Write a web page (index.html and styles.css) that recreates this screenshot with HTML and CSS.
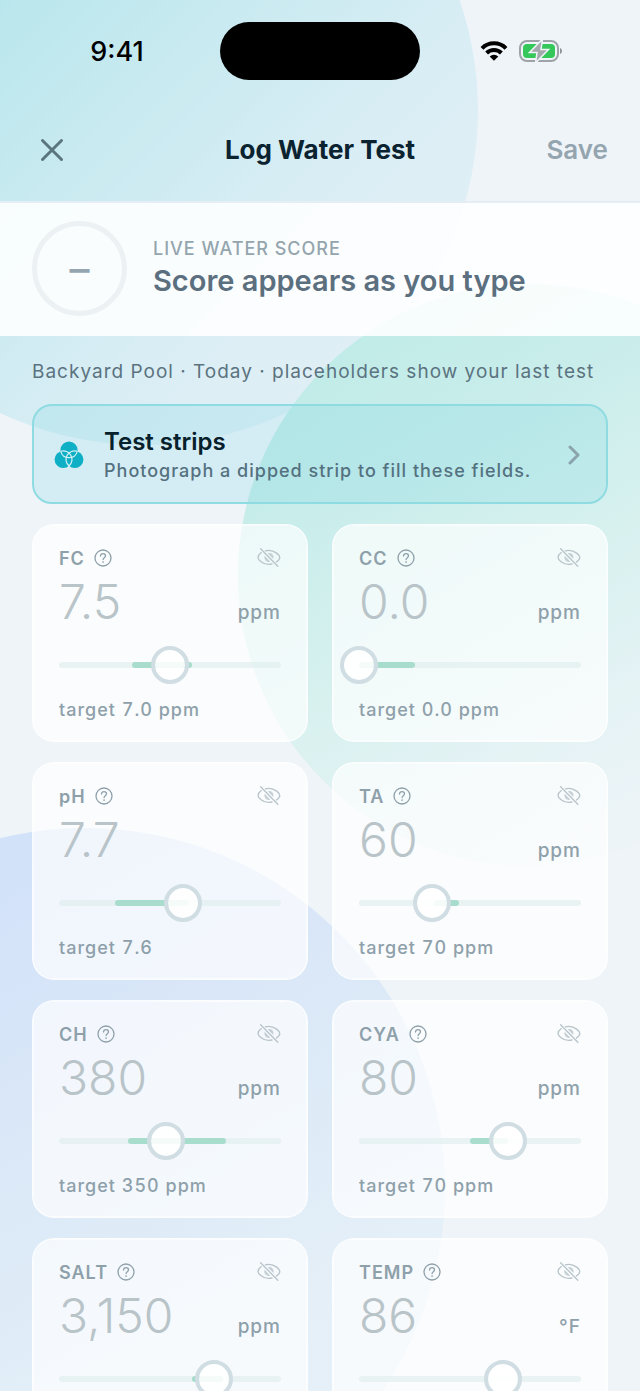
FILE: index.html
```html
<!DOCTYPE html>
<html lang="en">

<head>
    <meta charset="UTF-8">
    <meta name="viewport" content="width=device-width, initial-scale=1.0">
    <title>Log Water Test</title>
    <link rel="stylesheet" href="styles.css">
</head>

<body>
    <!-- Shared icons -->
    <svg class="sprite" aria-hidden="true">
        <symbol id="icon-help" viewBox="0 0 18 18">
            <circle cx="9" cy="9" r="8" />
            <path d="M6.500 7c0-1.500 1.100-2.400 2.500-2.400s2.500.9 2.500 2.200c0 1.900-2.400 1.900-2.400 3.800" />
            <circle cx="9.100" cy="13.100" r=".3" />
        </symbol>
        <symbol id="icon-eye-off" viewBox="0 0 24 20">
            <path d="M4.300 4.600C2.200 6.200 1 8.200 1 9.400c0 2 4.700 7 10.800 7 1.200 0 2.300-.2 3.300-.5" />
            <path d="M8.400 2.900c1-.3 2.200-.5 3.400-.5C18 2.400 22.800 7.300 22.800 9.400c0 1.200-1.300 3.100-3.400 4.700" />
            <path d="M7.700 7.800a4.400 4.400 0 0 0 5.500 5.900z" fill="currentColor" stroke="none" opacity=".8" />
            <path d="M10.800 5.200a4.400 4.400 0 0 1 5.500 5.700z" fill="currentColor" stroke="none" opacity=".8" />
            <path d="M3.600 .8l17.200 17.400" />
        </symbol>
    </svg>

    <div class="screen">
        <div class="backdrop" aria-hidden="true">
            <span class="bubble bubble-aqua"></span>
            <span class="bubble bubble-mint"></span>
            <span class="bubble bubble-blue"></span>
        </div>

        <!-- Status bar -->
        <div class="status-bar">
            <span class="status-time">9:41</span>
            <span class="island"></span>
            <span class="status-icons">
                <svg width="28" height="20" viewBox="0 0 28 20" aria-label="Wi-Fi">
                    <g fill="none" stroke="#000" stroke-width="4">
                        <path d="M2 7.300a17 17 0 0 1 24 0" />
                        <path d="M6.600 12a10.500 10.500 0 0 1 14.800 0" />
                    </g>
                    <path d="M14 19.800l-4.300-4.200a6.100 6.100 0 0 1 8.600 0z" />
                </svg>
                <svg width="44" height="24" viewBox="0 0 44 24" aria-label="Battery charging">
                    <rect x="1" y="2" width="38" height="20" rx="7" fill="none" stroke="#9da3a6" stroke-width="2" />
                    <rect x="4" y="5" width="32" height="14" rx="4" fill="#34c759" />
                    <path d="M41 9c2.700 1 2.700 5 0 6z" fill="#8f9598" />
                    <path d="M23.500 0L10.500 13.500h7.500L16.500 24l13-13.500h-7.500z" fill="#a3a9ac" stroke="#eff4f8" stroke-width="1.500" />
                </svg>
            </span>
        </div>

        <header class="nav-bar">
            <button type="button" class="close-btn" aria-label="Close">
                <svg width="24" height="24" viewBox="0 0 24 24">
                    <path d="M2.500 2.500l19 19M21.500 2.500l-19 19" />
                </svg>
            </button>
            <h1>Log Water Test</h1>
            <button type="button" class="save-btn">Save</button>
        </header>

        <section class="score">
            <div class="score-ring">–</div>
            <div>
                <p class="score-label">LIVE WATER SCORE</p>
                <h2>Score appears as you type</h2>
            </div>
        </section>

        <main>
            <p class="note">Backyard Pool · Today · placeholders show your last test</p>

            <a href="#strips" class="strips">
                <svg class="strips-icon" width="30" height="28" viewBox="0 0 30 28">
                    <g fill="#0fb0c6">
                        <circle cx="15" cy="9" r="8.600" />
                        <circle cx="9.200" cy="18.500" r="8.600" />
                        <circle cx="20.800" cy="18.500" r="8.600" />
                    </g>
                    <g fill="none" stroke="#d5f0f5" stroke-width="1.200">
                        <path d="M6.700 10.300A8.600 8.600 0 0 0 23.300 10.300" />
                        <path d="M6.700 10.300A8.600 8.600 0 0 1 15 25" />
                        <path d="M23.300 10.300A8.600 8.600 0 0 0 15 25" />
                    </g>
                </svg>
                <span class="strips-text">
                    <strong>Test strips</strong>
                    <span>Photograph a dipped strip to fill these fields.</span>
                </span>
                <svg class="chevron" width="12" height="20" viewBox="0 0 12 20">
                    <path d="M2 2l8 8-8 8" />
                </svg>
            </a>

            <form class="readings" id="readings"></form>
        </main>
    </div>

    <script>
        // low / high are the ideal band, both as a percentage of the slider
        const readings = [
            { id: 'fc', name: 'FC', last: '7.5', unit: 'ppm', target: '7.0 ppm', low: 33, high: 60, value: 50 },
            { id: 'cc', name: 'CC', last: '0.0', unit: 'ppm', target: '0.0 ppm', low: 0, high: 25, value: 0 },
            { id: 'ph', name: 'pH', last: '7.7', unit: '', target: '7.6', low: 25, high: 58, value: 56 },
            { id: 'ta', name: 'TA', last: '60', unit: 'ppm', target: '70 ppm', low: 34, high: 45, value: 33 },
            { id: 'ch', name: 'CH', last: '380', unit: 'ppm', target: '350 ppm', low: 31, high: 75, value: 48 },
            { id: 'cya', name: 'CYA', last: '80', unit: 'ppm', target: '70 ppm', low: 50, high: 67, value: 67 },
            { id: 'salt', name: 'SALT', last: '3,150', unit: 'ppm', low: 60, high: 74, value: 70 },
            { id: 'temp', name: 'TEMP', last: '86', unit: '°F', low: 66, high: 66, value: 65 }
        ];

        document.getElementById('readings').innerHTML = readings.map(r => `
            <div class="card">
                <div class="card-head">
                    <label for="${r.id}">${r.name}</label>
                    <button type="button" aria-label="About ${r.name}">
                        <svg class="help" width="18" height="18"><use href="#icon-help" /></svg>
                    </button>
                    <button type="button" class="hide-btn" aria-label="Hide ${r.name}">
                        <svg class="eye" width="24" height="20"><use href="#icon-eye-off" /></svg>
                    </button>
                </div>
                <div class="card-value">
                    <input type="text" inputmode="decimal" id="${r.id}" placeholder="${r.last}">
                    <span class="unit">${r.unit}</span>
                </div>
                <div class="slider" style="--low: ${r.low}%; --high: ${r.high}%">
                    <span class="band"></span>
                    <input type="range" min="0" max="100" value="${r.value}" aria-label="${r.name} level">
                </div>
                ${r.target ? `<p class="target">target ${r.target}</p>` : ''}
            </div>
        `).join('');
    </script>
</body>

</html>
```
FILE: styles.css
```css
* {
    box-sizing: border-box;
}

body {
    margin: 0;
    font-family: Inter, "Liberation Sans", sans-serif;
    color: #0b2230;
    background-color: #eff4f9;
}

h1, h2, p {
    margin: 0;
}

button {
    padding: 0;
    border: none;
    background: none;
    font-family: inherit;
    cursor: pointer;
}

.sprite {
    display: none;
}

.screen {
    position: relative;
    display: flex;
    flex-direction: column;
    height: 100vh;
    overflow: hidden;
}

/* Background bubbles */
.backdrop {
    position: absolute;
    inset: 0;
    z-index: -1;
    overflow: hidden;
}

.bubble {
    position: absolute;
    border-radius: 50%;
}

.bubble-aqua {
    left: -192px;
    top: -225px;
    width: 670px;
    height: 670px;
    background: linear-gradient(135deg, #a9e2e9 10%, #bfe8ee 38%, #dceef5 72%, #e4eff6);
}

.bubble-mint {
    left: 238px;
    top: 284px;
    width: 582px;
    height: 582px;
    background: linear-gradient(150deg, #bdebe6 5%, #c9edeb 30%, #d7f1ef 50%, rgba(224, 242, 243, 0.7) 68%, rgba(230, 243, 244, 0.2) 85%);
}

.bubble-blue {
    left: -275px;
    top: 828px;
    width: 720px;
    height: 720px;
    background: linear-gradient(150deg, #d2e2f9 18%, #d8e6f8 36%, #dfecf7 58%, #e6f0f8 75%);
}

/* Status bar */
.status-bar {
    display: grid;
    grid-template-columns: 1fr 200px 1fr;
    align-items: center;
    flex-shrink: 0;
    height: 102px;
    color: #000;
}

.status-time {
    padding-left: 14px;
    text-align: center;
    font-size: 27px;
    font-weight: 500;
}

.island {
    height: 58px;
    border-radius: 29px;
    background-color: #000;
}

.status-icons {
    display: flex;
    align-items: center;
    justify-content: center;
    gap: 11px;
    padding-right: 18px;
}

/* Nav bar */
.nav-bar {
    display: grid;
    grid-template-columns: 1fr auto 1fr;
    align-items: center;
    flex-shrink: 0;
    height: 99px;
    padding: 0 32px 4px;
}

.nav-bar h1 {
    font-size: 26px;
    font-weight: 700;
}

.close-btn {
    justify-self: start;
    padding: 8px;
}

.close-btn svg {
    display: block;
    fill: none;
    stroke: #5b757f;
    stroke-width: 3;
    stroke-linecap: round;
}

.save-btn {
    justify-self: end;
    color: #94a5b0;
    font-size: 26px;
    font-weight: 600;
}

/* Score */
.score {
    display: flex;
    align-items: center;
    gap: 26px;
    flex-shrink: 0;
    height: 135px;
    padding: 0 32px 2px;
    background-color: rgba(255, 255, 255, 0.87);
    border-top: 2px solid #e4eef4;
}

.score-ring {
    display: flex;
    align-items: center;
    justify-content: center;
    width: 95px;
    height: 95px;
    border: 5px solid #ecf2f4;
    border-radius: 50%;
    color: #94a5b0;
    font-size: 40px;
    font-weight: 500;
}

.score-label {
    color: #94a5ae;
    font-size: 18px;
    font-weight: 500;
    line-height: 24px;
    letter-spacing: 1px;
}

.score h2 {
    color: #5b6f7f;
    font-size: 29px;
    font-weight: 600;
    line-height: 40px;
}

main {
    padding: 24px 32px 0;
}

.note {
    color: #5b7380;
    font-size: 19px;
    line-height: 24px;
    letter-spacing: 1px;
    white-space: nowrap;
}

/* Test strips link */
.strips {
    display: flex;
    align-items: center;
    min-height: 100px;
    margin: 20px 0;
    padding: 2px 26px 0 20px;
    border: 2px solid #8fdbe2;
    border-radius: 20px;
    background-color: rgba(125, 215, 224, 0.24);
    color: inherit;
    text-decoration: none;
}

.strips-text {
    display: flex;
    flex: 1;
    flex-direction: column;
    margin-left: 20px;
    color: #547180;
    font-size: 18px;
    font-weight: 500;
    line-height: 26px;
    letter-spacing: 1px;
}

.strips-text strong {
    color: #06202c;
    font-size: 24px;
    font-weight: 600;
    line-height: 32px;
    letter-spacing: normal;
}

.chevron {
    fill: none;
    stroke: #8ba3ad;
    stroke-width: 3;
    stroke-linecap: round;
    stroke-linejoin: round;
}

/* Reading cards */
.readings {
    display: grid;
    grid-template-columns: 1fr 1fr;
    gap: 20px 24px;
}

.card {
    min-width: 0;
    padding: 20px 25px 18px;
    border: 2px solid rgba(255, 255, 255, 0.85);
    border-radius: 22px;
    background-color: rgba(255, 255, 255, 0.68);
    background-clip: padding-box;
    color: #8ea0aa;
}

.card-head {
    display: flex;
    align-items: center;
    gap: 9px;
    height: 24px;
}

.card-head label {
    font-size: 18px;
    font-weight: 600;
    letter-spacing: 1px;
}

.card-head svg {
    display: block;
    fill: none;
    stroke: currentColor;
    stroke-linecap: round;
}

.card-head button {
    color: #8ea0aa;
}

.card-head .help {
    stroke-width: 1.3;
}

.card-head .eye {
    stroke-width: 1.3;
}

.card-head .hide-btn {
    margin-left: auto;
    color: #b8c4ca;
}

.card-value {
    display: flex;
    align-items: baseline;
    height: 62px;
}

.card-value input {
    flex: 1;
    min-width: 0;
    height: 62px;
    padding: 0;
    border: none;
    outline: none;
    background: none;
    color: #0b2230;
    font-family: inherit;
    font-size: 48px;
    font-weight: 300;
}

.card-value input::placeholder {
    color: #b9c4c9;
    opacity: 1;
}

.unit {
    font-size: 19px;
    font-weight: 500;
    letter-spacing: 1px;
}

.slider {
    position: relative;
    height: 38px;
    margin: 14px 0;
}

/* Ideal band under the slider thumb */
.band {
    position: absolute;
    left: 0;
    right: 0;
    top: 16px;
    height: 6px;
    border-radius: 3px;
    background-color: rgba(222, 236, 236, 0.6);
}

.band::before {
    content: "";
    position: absolute;
    left: var(--low);
    right: calc(100% - var(--high));
    height: 6px;
    border-radius: 3px;
    background-color: #a8dccc;
}

.slider input {
    position: relative;
    display: block;
    width: calc(100% + 38px);
    height: 38px;
    margin: 0 -19px;
    appearance: none;
    background: none;
}

.slider input::-webkit-slider-thumb {
    appearance: none;
    width: 38px;
    height: 38px;
    border: 4px solid #d0dde3;
    border-radius: 50%;
    background-color: rgba(255, 255, 255, 0.88);
    background-clip: padding-box;
}

.target {
    font-size: 18px;
    font-weight: 500;
    line-height: 24px;
    letter-spacing: 1px;
    font-variant-numeric: tabular-nums;
}
```
